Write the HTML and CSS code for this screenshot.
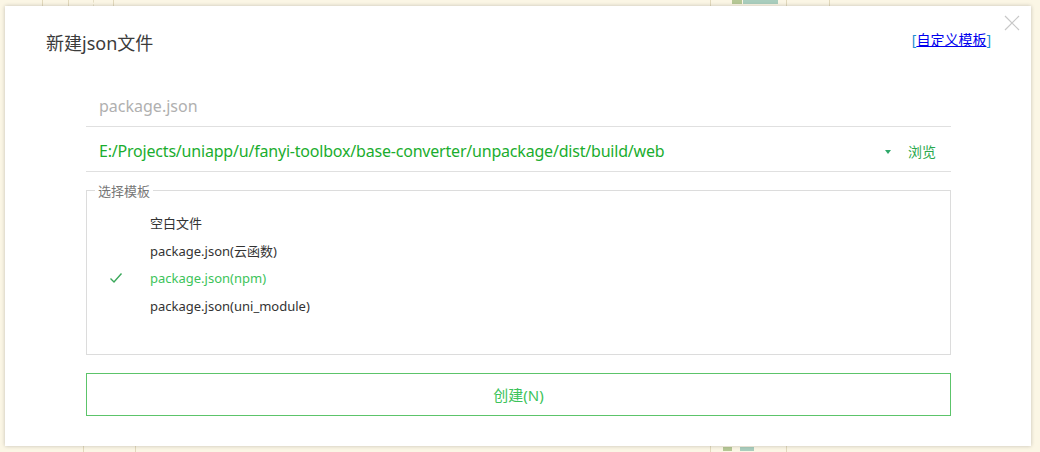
FILE: index.html
```html
<!DOCTYPE html>
<html lang="zh">
<head>
<meta charset="utf-8">
<link rel="stylesheet" href="styles.css">
</head>
<body>
<div class="bg">
  <div class="strip top">
    <span class="vl" style="left:42px"></span>
    <span class="vl" style="left:68px"></span>
    <span class="vl dash" style="left:93px"></span>
    <span class="vl" style="left:113px"></span>
    <span class="vl" style="left:710px"></span>
    <span class="blk g" style="left:732px;width:10px"></span>
    <span class="blk t" style="left:743px;width:35px"></span>
    <span class="vl" style="left:786px"></span>
    <span class="vl" style="left:829px"></span>
  </div>
  <div class="strip bottom">
    <span class="vl" style="left:83px"></span>
    <span class="vl" style="left:135px"></span>
    <span class="vl" style="left:710px"></span>
    <span class="blk g" style="left:723px;width:9px"></span>
    <span class="blk t" style="left:740px;width:14px"></span>
    <span class="vl" style="left:786px"></span>
  </div>
</div>
<div class="dialog">
  <button class="close" aria-label="close">
    <svg width="16" height="16" viewBox="0 0 16 16"><path d="M1 1L15 15M15 1L1 15" stroke="#c8c8c8" stroke-width="1.2" fill="none"/></svg>
  </button>
  <header class="head">
    <h1 class="title">新建json文件</h1>
    <a class="custom" href="#"><span class="br">[</span><u>自定义模板</u><span class="br">]</span></a>
  </header>
  <div class="form">
    <div class="field name">package.json</div>
    <div class="field path">
      <span class="path-text">E:/Projects/uniapp/u/fanyi-toolbox/base-converter/unpackage/dist/build/web</span>
      <span class="caret"></span>
      <span class="browse">浏览</span>
    </div>
    <fieldset class="tpl">
      <legend>选择模板</legend>
      <ul class="list">
        <li class="item"><span class="chk"></span>空白文件</li>
        <li class="item"><span class="chk"></span>package.json(云函数)</li>
        <li class="item sel"><span class="chk"><svg width="14" height="12" viewBox="0 0 14 12"><path d="M1.5 6.5L5 10L12.5 1.5" stroke="#3aa85a" stroke-width="1.4" fill="none"/></svg></span>package.json(npm)</li>
        <li class="item"><span class="chk"></span>package.json(uni_module)</li>
      </ul>
    </fieldset>
    <button class="create">创建(N)</button>
  </div>
</div>
</body>
</html>
```
FILE: styles.css
```css
html, body { margin: 0; padding: 0; }
body {
  width: 1040px; height: 452px; overflow: hidden; position: relative;
  background: #fbf6e5;
  font-family: "Noto Sans", "Noto Sans CJK SC", sans-serif;
}
.bg { position: absolute; left: 0; top: 0; width: 1040px; height: 452px; }
.strip { position: absolute; left: 0; width: 1040px; height: 7px; overflow: hidden; }
.strip.top { top: 0; }
.strip.bottom { top: 445px; }
.vl { position: absolute; top: 0; height: 7px; width: 1px; background: #e2d9bc; }
.vl.dash { background: none; border-left: 1px dashed #e6dfc6; width: 0; }
.blk { position: absolute; top: 0; height: 4px; }
.strip.bottom .blk { top: 2px; }
.blk.g { background: #b5c795; }
.blk.t { background: #a9cdbd; }

.dialog {
  position: absolute; left: 5px; top: 6px; width: 1026px; height: 440px;
  background: #fff; box-shadow: 0 0 4px rgba(0,0,0,0.22);
  box-sizing: border-box; padding: 0 40px 0 41px;
}
.close {
  position: absolute; right: 11px; top: 9px; border: 0; background: none; padding: 0;
  width: 16px; height: 16px; display: block;
}
.close svg { display: block; }
.head { display: flex; justify-content: space-between; align-items: center; height: 70px; padding-top: 2px; box-sizing: border-box; }
.title { margin: 0; font-weight: normal; font-size: 18px; color: #3b3b3b; }
.custom { font-size: 14px; color: #0000ee; text-decoration: none; margin-right: 0; margin-top: -6px; }
.custom .br { color: #1a8fd0; }
.custom u { text-decoration: underline; }
.form { padding: 9px 0 0 40px; margin-right: 40px; }
.field { height: 45px; border-bottom: 1px solid #e0e0e0; display: flex; align-items: center; padding-left: 13px; font-size: 16px; box-sizing: border-box; }
.name { color: #b0b0b0; height: 42px; padding-top: 1px; }
.path { color: #1aad2e; height: 45px; padding-top: 4px; }
.path-text { flex: 1; letter-spacing: -0.2px; }
.caret { width: 0; height: 0; border-left: 3px solid transparent; border-right: 3px solid transparent; border-top: 4px solid #2fa86a; margin-right: 17px; margin-top: 1px; }
.browse { font-size: 14px; color: #2aa84c; margin-right: 15px; }
.tpl { margin: 9px 0 0 0; border: 1px solid #dcdcdc; padding: 0; height: 174px; box-sizing: border-box; min-width: 0; }
.tpl legend { font-size: 13px; color: #777; padding: 0 3px; margin-left: 8px; }
.list { list-style: none; margin: 0; padding: 8px 0 0 0; }
.item { height: 28px; display: flex; align-items: center; font-size: 13px; color: #333; }
.chk { width: 63px; display: flex; justify-content: flex-start; padding-left: 22px; box-sizing: border-box; }
.chk svg { display: block; }
.item.sel { color: #3cc35a; }
.create {
  display: block; width: 100%; height: 43px; margin-top: 18px;
  border: 1px solid #5cc46a; background: #fff; color: #3cc35a;
  font-family: inherit; font-size: 15px; padding: 0;
}
```
